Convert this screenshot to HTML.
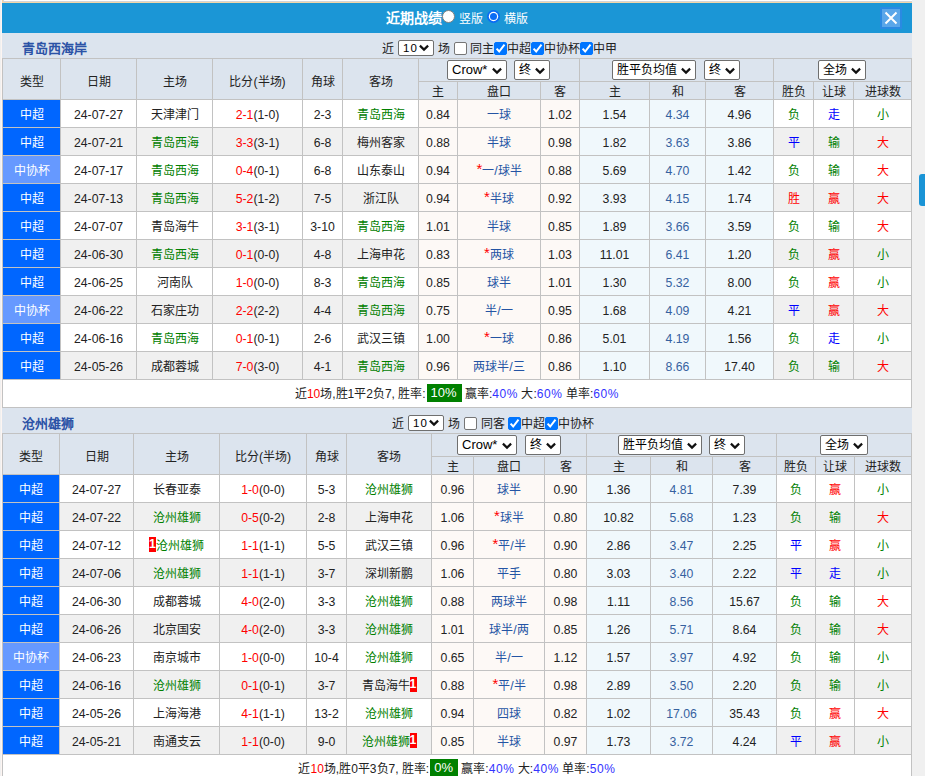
<!DOCTYPE html>
<html lang="zh-CN"><head><meta charset="utf-8"><title>近期战绩</title>
<style>
html,body{margin:0;padding:0}
body{width:925px;height:776px;overflow:hidden;position:relative;background:#f0f0f0;font-family:"Liberation Sans",sans-serif;font-size:12px;color:#222}
.n{font-size:12.25px}
#c>div,#c>span{position:absolute;box-sizing:border-box}
.sel{background:#fff;border:1px solid #6f6f6f;border-radius:2px;box-sizing:content-box!important;font-size:13px;color:#000}
.sel .st{position:absolute;left:4px;top:0;line-height:18px;white-space:nowrap}
.sel .chev{position:absolute;right:4px;top:5px}
.cb{width:13px;height:13px;border:1px solid #767676;border-radius:2px;background:#fff}
.cb.on{background:#0075ff;border-color:#0075ff}
.cb.on svg{position:absolute;left:-1px;top:-1px}
.rc{display:inline-block;background:#f00;color:#fff;font-size:12px;font-weight:bold;line-height:15px;width:7px;text-align:center;vertical-align:-2px;overflow:hidden}
.pct{display:inline-block;background:#008000;color:#fff;padding:0 5px 0 4px;line-height:18px;margin-left:1px;font-size:13px;vertical-align:1px}
.bl{color:#3333ff;letter-spacing:0.6px}
.ast{color:#f00;font-size:15px;line-height:10px;vertical-align:1px}
</style></head><body><div id="c">
<div style="left:2px;top:0px;width:910px;height:776px;background:#fff"></div>
<div style="left:2px;top:0px;width:910px;height:3px;background:#fff"></div>
<div style="left:2px;top:1px;width:910px;height:1px;background:#d4d4d8"></div>
<div style="left:2px;top:2px;width:910px;height:1px;background:#f2d7a8"></div>
<div style="left:2px;top:0px;width:1px;height:3px;background:#f2d7a8"></div>
<div style="left:3px;top:0px;width:1px;height:2px;background:#d4d4d8"></div>
<div style="left:1px;top:0px;width:1px;height:776px;background:#fdf5f2"></div>
<div style="left:2px;top:3px;width:910px;height:30px;background:#1b96d6"></div>
<div style="left:386px;top:8px;white-space:nowrap;font-size:14px;font-weight:bold;color:#fff;line-height:20px">近期战绩</div>
<div style="left:442px;top:10px;width:13px;height:13px;border-radius:50%;background:#fff;border:1px solid #808080"></div>
<div style="left:459px;top:11px;white-space:nowrap;font-size:12px;color:#fff;line-height:16px">竖版</div>
<div style="left:487px;top:10px;width:13px;height:13px"><svg width="13" height="13" viewBox="0 0 13 13"><circle cx="6.5" cy="6.5" r="6.5" fill="#0a6cf5"/><circle cx="6.5" cy="6.5" r="4.7" fill="#fff"/><circle cx="6.5" cy="6.5" r="3.5" fill="#0a6cf5"/></svg></div>
<div style="left:504px;top:11px;white-space:nowrap;font-size:12px;color:#fff;line-height:16px">横版</div>
<div style="left:880px;top:7px;width:22px;height:22px;background:#2a8ae2"></div>
<div style="left:882px;top:9px;width:18px;height:18px;background:#5aa6e9"><svg width="18" height="18" viewBox="0 0 18 18" style="position:absolute;left:0;top:0"><path d="M3.5 3.5 L14.5 14.5 M14.5 3.5 L3.5 14.5" stroke="#fff" stroke-width="2"/></svg></div>
<div style="left:2px;top:33px;width:910px;height:25px;background:#dce4ee"></div>
<div style="left:22px;top:41px;white-space:nowrap;font-size:13px;font-weight:bold;color:#2b52a6;line-height:15px">青岛西海岸</div>
<div style="left:382px;top:41px;white-space:nowrap;font-size:12px;line-height:16px">近</div>
<div class="sel" style="left:398px;top:40px;width:34px;height:14px;font-size:12px"><span class="st" style="line-height:14px;"><span style="font-size:11.5px;position:relative;left:0px;letter-spacing:1px">10</span></span><svg class="chev" style="top:3px" width="10" height="8" viewBox="0 0 10 8"><path d="M0.9 1.6 L5 5.6 L9.1 1.6" fill="none" stroke="#111" stroke-width="2.2"/></svg></div>
<div style="left:438px;top:41px;white-space:nowrap;font-size:12px;line-height:16px">场</div>
<div class="cb" style="left:454px;top:42px"></div>
<div style="left:470px;top:41px;white-space:nowrap;font-size:12px;line-height:16px">同主</div>
<div class="cb on" style="left:494px;top:42px"><svg width="13" height="13" viewBox="0 0 13 13"><path d="M2.6 6.6 L5.2 9.5 L10.5 2.7" fill="none" stroke="#fff" stroke-width="2"/></svg></div>
<div style="left:507px;top:41px;white-space:nowrap;font-size:12px;line-height:16px">中超</div>
<div class="cb on" style="left:531px;top:42px"><svg width="13" height="13" viewBox="0 0 13 13"><path d="M2.6 6.6 L5.2 9.5 L10.5 2.7" fill="none" stroke="#fff" stroke-width="2"/></svg></div>
<div style="left:544px;top:41px;white-space:nowrap;font-size:12px;line-height:16px">中协杯</div>
<div class="cb on" style="left:580px;top:42px"><svg width="13" height="13" viewBox="0 0 13 13"><path d="M2.6 6.6 L5.2 9.5 L10.5 2.7" fill="none" stroke="#fff" stroke-width="2"/></svg></div>
<div style="left:593px;top:41px;white-space:nowrap;font-size:12px;line-height:16px">中甲</div>
<div style="left:2px;top:58px;width:910px;height:42px;background:#dce4ee"></div>
<div style="left:2px;top:58px;width:910px;height:42px;background:#dce4ee"></div>
<div style="left:2px;top:99px;width:58px;height:28px;background:#0066ff"></div>
<div style="left:418px;top:99px;width:161px;height:28px;background:#fdf9f6"></div>
<div style="left:579px;top:99px;width:194px;height:28px;background:#f0f8fc"></div>
<div style="left:60px;top:127px;width:358px;height:28px;background:#f0f0f0"></div>
<div style="left:773px;top:127px;width:138px;height:28px;background:#f0f0f0"></div>
<div style="left:2px;top:127px;width:58px;height:28px;background:#0066ff"></div>
<div style="left:418px;top:127px;width:161px;height:28px;background:#fdf9f6"></div>
<div style="left:579px;top:127px;width:194px;height:28px;background:#f0f8fc"></div>
<div style="left:2px;top:155px;width:58px;height:28px;background:#6699ff"></div>
<div style="left:418px;top:155px;width:161px;height:28px;background:#fdf9f6"></div>
<div style="left:579px;top:155px;width:194px;height:28px;background:#f0f8fc"></div>
<div style="left:60px;top:183px;width:358px;height:28px;background:#f0f0f0"></div>
<div style="left:773px;top:183px;width:138px;height:28px;background:#f0f0f0"></div>
<div style="left:2px;top:183px;width:58px;height:28px;background:#0066ff"></div>
<div style="left:418px;top:183px;width:161px;height:28px;background:#fdf9f6"></div>
<div style="left:579px;top:183px;width:194px;height:28px;background:#f0f8fc"></div>
<div style="left:2px;top:211px;width:58px;height:28px;background:#0066ff"></div>
<div style="left:418px;top:211px;width:161px;height:28px;background:#fdf9f6"></div>
<div style="left:579px;top:211px;width:194px;height:28px;background:#f0f8fc"></div>
<div style="left:60px;top:239px;width:358px;height:28px;background:#f0f0f0"></div>
<div style="left:773px;top:239px;width:138px;height:28px;background:#f0f0f0"></div>
<div style="left:2px;top:239px;width:58px;height:28px;background:#0066ff"></div>
<div style="left:418px;top:239px;width:161px;height:28px;background:#fdf9f6"></div>
<div style="left:579px;top:239px;width:194px;height:28px;background:#f0f8fc"></div>
<div style="left:2px;top:267px;width:58px;height:28px;background:#0066ff"></div>
<div style="left:418px;top:267px;width:161px;height:28px;background:#fdf9f6"></div>
<div style="left:579px;top:267px;width:194px;height:28px;background:#f0f8fc"></div>
<div style="left:60px;top:295px;width:358px;height:28px;background:#f0f0f0"></div>
<div style="left:773px;top:295px;width:138px;height:28px;background:#f0f0f0"></div>
<div style="left:2px;top:295px;width:58px;height:28px;background:#6699ff"></div>
<div style="left:418px;top:295px;width:161px;height:28px;background:#fdf9f6"></div>
<div style="left:579px;top:295px;width:194px;height:28px;background:#f0f8fc"></div>
<div style="left:2px;top:323px;width:58px;height:28px;background:#0066ff"></div>
<div style="left:418px;top:323px;width:161px;height:28px;background:#fdf9f6"></div>
<div style="left:579px;top:323px;width:194px;height:28px;background:#f0f8fc"></div>
<div style="left:60px;top:351px;width:358px;height:28px;background:#f0f0f0"></div>
<div style="left:773px;top:351px;width:138px;height:28px;background:#f0f0f0"></div>
<div style="left:2px;top:351px;width:58px;height:28px;background:#0066ff"></div>
<div style="left:418px;top:351px;width:161px;height:28px;background:#fdf9f6"></div>
<div style="left:579px;top:351px;width:194px;height:28px;background:#f0f8fc"></div>
<div style="left:2px;top:379px;width:909px;height:28px;background:#fff"></div>
<div style="left:2px;top:58px;width:910px;height:1px;background:#c2c2c2"></div>
<div style="left:418px;top:81px;width:494px;height:1px;background:#c2c2c2"></div>
<div style="left:2px;top:99px;width:910px;height:1px;background:#c2c2c2"></div>
<div style="left:2px;top:127px;width:910px;height:1px;background:#c2c2c2"></div>
<div style="left:2px;top:155px;width:910px;height:1px;background:#c2c2c2"></div>
<div style="left:2px;top:183px;width:910px;height:1px;background:#c2c2c2"></div>
<div style="left:2px;top:211px;width:910px;height:1px;background:#c2c2c2"></div>
<div style="left:2px;top:239px;width:910px;height:1px;background:#c2c2c2"></div>
<div style="left:2px;top:267px;width:910px;height:1px;background:#c2c2c2"></div>
<div style="left:2px;top:295px;width:910px;height:1px;background:#c2c2c2"></div>
<div style="left:2px;top:323px;width:910px;height:1px;background:#c2c2c2"></div>
<div style="left:2px;top:351px;width:910px;height:1px;background:#c2c2c2"></div>
<div style="left:2px;top:379px;width:910px;height:1px;background:#c2c2c2"></div>
<div style="left:2px;top:407px;width:910px;height:1px;background:#c2c2c2"></div>
<div style="left:2px;top:58px;width:1px;height:350px;background:#c2c2c2"></div>
<div style="left:60px;top:58px;width:1px;height:322px;background:#c2c2c2"></div>
<div style="left:136px;top:58px;width:1px;height:322px;background:#c2c2c2"></div>
<div style="left:212px;top:58px;width:1px;height:322px;background:#c2c2c2"></div>
<div style="left:302px;top:58px;width:1px;height:322px;background:#c2c2c2"></div>
<div style="left:342px;top:58px;width:1px;height:322px;background:#c2c2c2"></div>
<div style="left:418px;top:58px;width:1px;height:322px;background:#c2c2c2"></div>
<div style="left:457px;top:81px;width:1px;height:299px;background:#c2c2c2"></div>
<div style="left:540px;top:81px;width:1px;height:299px;background:#c2c2c2"></div>
<div style="left:579px;top:58px;width:1px;height:322px;background:#c2c2c2"></div>
<div style="left:649px;top:81px;width:1px;height:299px;background:#c2c2c2"></div>
<div style="left:705px;top:81px;width:1px;height:299px;background:#c2c2c2"></div>
<div style="left:773px;top:58px;width:1px;height:322px;background:#c2c2c2"></div>
<div style="left:813px;top:81px;width:1px;height:299px;background:#c2c2c2"></div>
<div style="left:853px;top:81px;width:1px;height:299px;background:#c2c2c2"></div>
<div style="left:911px;top:58px;width:1px;height:350px;background:#c2c2c2"></div>
<div style="left:3px;top:62px;width:57px;height:40px;text-align:center;line-height:40px;white-space:nowrap;">类型</div>
<div style="left:61px;top:62px;width:75px;height:40px;text-align:center;line-height:40px;white-space:nowrap;">日期</div>
<div style="left:137px;top:62px;width:75px;height:40px;text-align:center;line-height:40px;white-space:nowrap;">主场</div>
<div style="left:213px;top:62px;width:89px;height:40px;text-align:center;line-height:40px;white-space:nowrap;">比分<span class="n">(</span>半场<span class="n">)</span></div>
<div style="left:303px;top:62px;width:39px;height:40px;text-align:center;line-height:40px;white-space:nowrap;">角球</div>
<div style="left:343px;top:62px;width:75px;height:40px;text-align:center;line-height:40px;white-space:nowrap;">客场</div>
<div style="left:419px;top:84px;width:38px;height:17px;text-align:center;line-height:17px;white-space:nowrap;">主</div>
<div style="left:458px;top:84px;width:82px;height:17px;text-align:center;line-height:17px;white-space:nowrap;">盘口</div>
<div style="left:541px;top:84px;width:38px;height:17px;text-align:center;line-height:17px;white-space:nowrap;">客</div>
<div style="left:580px;top:84px;width:69px;height:17px;text-align:center;line-height:17px;white-space:nowrap;">主</div>
<div style="left:650px;top:84px;width:55px;height:17px;text-align:center;line-height:17px;white-space:nowrap;">和</div>
<div style="left:706px;top:84px;width:67px;height:17px;text-align:center;line-height:17px;white-space:nowrap;">客</div>
<div style="left:774px;top:84px;width:39px;height:17px;text-align:center;line-height:17px;white-space:nowrap;">胜负</div>
<div style="left:814px;top:84px;width:39px;height:17px;text-align:center;line-height:17px;white-space:nowrap;">让球</div>
<div style="left:854px;top:84px;width:57px;height:17px;text-align:center;line-height:17px;white-space:nowrap;">进球数</div>
<div class="sel" style="left:447px;top:60px;width:58px;height:18px;"><span class="st" style="line-height:18px;">Crow*</span><svg class="chev" style="top:6px" width="10" height="8" viewBox="0 0 10 8"><path d="M0.9 1.6 L5 5.6 L9.1 1.6" fill="none" stroke="#111" stroke-width="2.2"/></svg></div>
<div class="sel" style="left:514px;top:60px;width:34px;height:18px;"><span class="st" style="line-height:18px;font-size:12px">终</span><svg class="chev" style="top:6px" width="10" height="8" viewBox="0 0 10 8"><path d="M0.9 1.6 L5 5.6 L9.1 1.6" fill="none" stroke="#111" stroke-width="2.2"/></svg></div>
<div class="sel" style="left:612px;top:60px;width:82px;height:18px;"><span class="st" style="line-height:18px;font-size:12px">胜平负均值</span><svg class="chev" style="top:6px" width="10" height="8" viewBox="0 0 10 8"><path d="M0.9 1.6 L5 5.6 L9.1 1.6" fill="none" stroke="#111" stroke-width="2.2"/></svg></div>
<div class="sel" style="left:704px;top:60px;width:34px;height:18px;"><span class="st" style="line-height:18px;font-size:12px">终</span><svg class="chev" style="top:6px" width="10" height="8" viewBox="0 0 10 8"><path d="M0.9 1.6 L5 5.6 L9.1 1.6" fill="none" stroke="#111" stroke-width="2.2"/></svg></div>
<div class="sel" style="left:818px;top:60px;width:46px;height:18px;"><span class="st" style="line-height:18px;font-size:12px">全场</span><svg class="chev" style="top:6px" width="10" height="8" viewBox="0 0 10 8"><path d="M0.9 1.6 L5 5.6 L9.1 1.6" fill="none" stroke="#111" stroke-width="2.2"/></svg></div>
<div style="left:3px;top:102px;width:57px;height:27px;text-align:center;line-height:27px;white-space:nowrap;color:#fff">中超</div>
<div style="left:61px;top:102px;width:75px;height:27px;text-align:center;line-height:27px;white-space:nowrap;"><span class="n">24-07-27</span></div>
<div style="left:137px;top:102px;width:75px;height:27px;text-align:center;line-height:27px;white-space:nowrap;color:#222">天津津门</div>
<div style="left:343px;top:102px;width:75px;height:27px;text-align:center;line-height:27px;white-space:nowrap;color:#008000">青岛西海</div>
<div style="left:213px;top:102px;width:89px;height:27px;text-align:center;line-height:27px;white-space:nowrap;"><span style="color:#ff0000"><span class="n">2-1</span></span><span class="n">(1-0)</span></div>
<div style="left:303px;top:102px;width:39px;height:27px;text-align:center;line-height:27px;white-space:nowrap;"><span class="n">2-3</span></div>
<div style="left:419px;top:102px;width:38px;height:27px;text-align:center;line-height:27px;white-space:nowrap;"><span class="n">0.84</span></div>
<div style="left:458px;top:102px;width:82px;height:27px;text-align:center;line-height:27px;white-space:nowrap;color:#2454a4">一球</div>
<div style="left:541px;top:102px;width:38px;height:27px;text-align:center;line-height:27px;white-space:nowrap;"><span class="n">1.02</span></div>
<div style="left:580px;top:102px;width:69px;height:27px;text-align:center;line-height:27px;white-space:nowrap;"><span class="n">1.54</span></div>
<div style="left:650px;top:102px;width:55px;height:27px;text-align:center;line-height:27px;white-space:nowrap;color:#36619f"><span class="n">4.34</span></div>
<div style="left:706px;top:102px;width:67px;height:27px;text-align:center;line-height:27px;white-space:nowrap;"><span class="n">4.96</span></div>
<div style="left:774px;top:102px;width:39px;height:27px;text-align:center;line-height:27px;white-space:nowrap;color:#008000">负</div>
<div style="left:814px;top:102px;width:39px;height:27px;text-align:center;line-height:27px;white-space:nowrap;color:#0000ff">走</div>
<div style="left:854px;top:102px;width:57px;height:27px;text-align:center;line-height:27px;white-space:nowrap;color:#008000">小</div>
<div style="left:3px;top:130px;width:57px;height:27px;text-align:center;line-height:27px;white-space:nowrap;color:#fff">中超</div>
<div style="left:61px;top:130px;width:75px;height:27px;text-align:center;line-height:27px;white-space:nowrap;"><span class="n">24-07-21</span></div>
<div style="left:137px;top:130px;width:75px;height:27px;text-align:center;line-height:27px;white-space:nowrap;color:#008000">青岛西海</div>
<div style="left:343px;top:130px;width:75px;height:27px;text-align:center;line-height:27px;white-space:nowrap;color:#222">梅州客家</div>
<div style="left:213px;top:130px;width:89px;height:27px;text-align:center;line-height:27px;white-space:nowrap;"><span style="color:#ff0000"><span class="n">3-3</span></span><span class="n">(3-1)</span></div>
<div style="left:303px;top:130px;width:39px;height:27px;text-align:center;line-height:27px;white-space:nowrap;"><span class="n">6-8</span></div>
<div style="left:419px;top:130px;width:38px;height:27px;text-align:center;line-height:27px;white-space:nowrap;"><span class="n">0.88</span></div>
<div style="left:458px;top:130px;width:82px;height:27px;text-align:center;line-height:27px;white-space:nowrap;color:#2454a4">半球</div>
<div style="left:541px;top:130px;width:38px;height:27px;text-align:center;line-height:27px;white-space:nowrap;"><span class="n">0.98</span></div>
<div style="left:580px;top:130px;width:69px;height:27px;text-align:center;line-height:27px;white-space:nowrap;"><span class="n">1.82</span></div>
<div style="left:650px;top:130px;width:55px;height:27px;text-align:center;line-height:27px;white-space:nowrap;color:#36619f"><span class="n">3.63</span></div>
<div style="left:706px;top:130px;width:67px;height:27px;text-align:center;line-height:27px;white-space:nowrap;"><span class="n">3.86</span></div>
<div style="left:774px;top:130px;width:39px;height:27px;text-align:center;line-height:27px;white-space:nowrap;color:#0000ff">平</div>
<div style="left:814px;top:130px;width:39px;height:27px;text-align:center;line-height:27px;white-space:nowrap;color:#008000">输</div>
<div style="left:854px;top:130px;width:57px;height:27px;text-align:center;line-height:27px;white-space:nowrap;color:#ff0000">大</div>
<div style="left:3px;top:158px;width:57px;height:27px;text-align:center;line-height:27px;white-space:nowrap;color:#fff">中协杯</div>
<div style="left:61px;top:158px;width:75px;height:27px;text-align:center;line-height:27px;white-space:nowrap;"><span class="n">24-07-17</span></div>
<div style="left:137px;top:158px;width:75px;height:27px;text-align:center;line-height:27px;white-space:nowrap;color:#008000">青岛西海</div>
<div style="left:343px;top:158px;width:75px;height:27px;text-align:center;line-height:27px;white-space:nowrap;color:#222">山东泰山</div>
<div style="left:213px;top:158px;width:89px;height:27px;text-align:center;line-height:27px;white-space:nowrap;"><span style="color:#ff0000"><span class="n">0-4</span></span><span class="n">(0-1)</span></div>
<div style="left:303px;top:158px;width:39px;height:27px;text-align:center;line-height:27px;white-space:nowrap;"><span class="n">6-8</span></div>
<div style="left:419px;top:158px;width:38px;height:27px;text-align:center;line-height:27px;white-space:nowrap;"><span class="n">0.94</span></div>
<div style="left:458px;top:158px;width:82px;height:27px;text-align:center;line-height:27px;white-space:nowrap;color:#2454a4"><span class="ast">*</span>一<span class="n">/</span>球半</div>
<div style="left:541px;top:158px;width:38px;height:27px;text-align:center;line-height:27px;white-space:nowrap;"><span class="n">0.88</span></div>
<div style="left:580px;top:158px;width:69px;height:27px;text-align:center;line-height:27px;white-space:nowrap;"><span class="n">5.69</span></div>
<div style="left:650px;top:158px;width:55px;height:27px;text-align:center;line-height:27px;white-space:nowrap;color:#36619f"><span class="n">4.70</span></div>
<div style="left:706px;top:158px;width:67px;height:27px;text-align:center;line-height:27px;white-space:nowrap;"><span class="n">1.42</span></div>
<div style="left:774px;top:158px;width:39px;height:27px;text-align:center;line-height:27px;white-space:nowrap;color:#008000">负</div>
<div style="left:814px;top:158px;width:39px;height:27px;text-align:center;line-height:27px;white-space:nowrap;color:#008000">输</div>
<div style="left:854px;top:158px;width:57px;height:27px;text-align:center;line-height:27px;white-space:nowrap;color:#ff0000">大</div>
<div style="left:3px;top:186px;width:57px;height:27px;text-align:center;line-height:27px;white-space:nowrap;color:#fff">中超</div>
<div style="left:61px;top:186px;width:75px;height:27px;text-align:center;line-height:27px;white-space:nowrap;"><span class="n">24-07-13</span></div>
<div style="left:137px;top:186px;width:75px;height:27px;text-align:center;line-height:27px;white-space:nowrap;color:#008000">青岛西海</div>
<div style="left:343px;top:186px;width:75px;height:27px;text-align:center;line-height:27px;white-space:nowrap;color:#222">浙江队</div>
<div style="left:213px;top:186px;width:89px;height:27px;text-align:center;line-height:27px;white-space:nowrap;"><span style="color:#ff0000"><span class="n">5-2</span></span><span class="n">(1-2)</span></div>
<div style="left:303px;top:186px;width:39px;height:27px;text-align:center;line-height:27px;white-space:nowrap;"><span class="n">7-5</span></div>
<div style="left:419px;top:186px;width:38px;height:27px;text-align:center;line-height:27px;white-space:nowrap;"><span class="n">0.94</span></div>
<div style="left:458px;top:186px;width:82px;height:27px;text-align:center;line-height:27px;white-space:nowrap;color:#2454a4"><span class="ast">*</span>半球</div>
<div style="left:541px;top:186px;width:38px;height:27px;text-align:center;line-height:27px;white-space:nowrap;"><span class="n">0.92</span></div>
<div style="left:580px;top:186px;width:69px;height:27px;text-align:center;line-height:27px;white-space:nowrap;"><span class="n">3.93</span></div>
<div style="left:650px;top:186px;width:55px;height:27px;text-align:center;line-height:27px;white-space:nowrap;color:#36619f"><span class="n">4.15</span></div>
<div style="left:706px;top:186px;width:67px;height:27px;text-align:center;line-height:27px;white-space:nowrap;"><span class="n">1.74</span></div>
<div style="left:774px;top:186px;width:39px;height:27px;text-align:center;line-height:27px;white-space:nowrap;color:#ff0000">胜</div>
<div style="left:814px;top:186px;width:39px;height:27px;text-align:center;line-height:27px;white-space:nowrap;color:#ff0000">赢</div>
<div style="left:854px;top:186px;width:57px;height:27px;text-align:center;line-height:27px;white-space:nowrap;color:#ff0000">大</div>
<div style="left:3px;top:214px;width:57px;height:27px;text-align:center;line-height:27px;white-space:nowrap;color:#fff">中超</div>
<div style="left:61px;top:214px;width:75px;height:27px;text-align:center;line-height:27px;white-space:nowrap;"><span class="n">24-07-07</span></div>
<div style="left:137px;top:214px;width:75px;height:27px;text-align:center;line-height:27px;white-space:nowrap;color:#222">青岛海牛</div>
<div style="left:343px;top:214px;width:75px;height:27px;text-align:center;line-height:27px;white-space:nowrap;color:#008000">青岛西海</div>
<div style="left:213px;top:214px;width:89px;height:27px;text-align:center;line-height:27px;white-space:nowrap;"><span style="color:#ff0000"><span class="n">3-1</span></span><span class="n">(3-1)</span></div>
<div style="left:303px;top:214px;width:39px;height:27px;text-align:center;line-height:27px;white-space:nowrap;"><span class="n">3-10</span></div>
<div style="left:419px;top:214px;width:38px;height:27px;text-align:center;line-height:27px;white-space:nowrap;"><span class="n">1.01</span></div>
<div style="left:458px;top:214px;width:82px;height:27px;text-align:center;line-height:27px;white-space:nowrap;color:#2454a4">半球</div>
<div style="left:541px;top:214px;width:38px;height:27px;text-align:center;line-height:27px;white-space:nowrap;"><span class="n">0.85</span></div>
<div style="left:580px;top:214px;width:69px;height:27px;text-align:center;line-height:27px;white-space:nowrap;"><span class="n">1.89</span></div>
<div style="left:650px;top:214px;width:55px;height:27px;text-align:center;line-height:27px;white-space:nowrap;color:#36619f"><span class="n">3.66</span></div>
<div style="left:706px;top:214px;width:67px;height:27px;text-align:center;line-height:27px;white-space:nowrap;"><span class="n">3.59</span></div>
<div style="left:774px;top:214px;width:39px;height:27px;text-align:center;line-height:27px;white-space:nowrap;color:#008000">负</div>
<div style="left:814px;top:214px;width:39px;height:27px;text-align:center;line-height:27px;white-space:nowrap;color:#008000">输</div>
<div style="left:854px;top:214px;width:57px;height:27px;text-align:center;line-height:27px;white-space:nowrap;color:#ff0000">大</div>
<div style="left:3px;top:242px;width:57px;height:27px;text-align:center;line-height:27px;white-space:nowrap;color:#fff">中超</div>
<div style="left:61px;top:242px;width:75px;height:27px;text-align:center;line-height:27px;white-space:nowrap;"><span class="n">24-06-30</span></div>
<div style="left:137px;top:242px;width:75px;height:27px;text-align:center;line-height:27px;white-space:nowrap;color:#008000">青岛西海</div>
<div style="left:343px;top:242px;width:75px;height:27px;text-align:center;line-height:27px;white-space:nowrap;color:#222">上海申花</div>
<div style="left:213px;top:242px;width:89px;height:27px;text-align:center;line-height:27px;white-space:nowrap;"><span style="color:#ff0000"><span class="n">0-1</span></span><span class="n">(0-0)</span></div>
<div style="left:303px;top:242px;width:39px;height:27px;text-align:center;line-height:27px;white-space:nowrap;"><span class="n">4-8</span></div>
<div style="left:419px;top:242px;width:38px;height:27px;text-align:center;line-height:27px;white-space:nowrap;"><span class="n">0.83</span></div>
<div style="left:458px;top:242px;width:82px;height:27px;text-align:center;line-height:27px;white-space:nowrap;color:#2454a4"><span class="ast">*</span>两球</div>
<div style="left:541px;top:242px;width:38px;height:27px;text-align:center;line-height:27px;white-space:nowrap;"><span class="n">1.03</span></div>
<div style="left:580px;top:242px;width:69px;height:27px;text-align:center;line-height:27px;white-space:nowrap;"><span class="n">11.01</span></div>
<div style="left:650px;top:242px;width:55px;height:27px;text-align:center;line-height:27px;white-space:nowrap;color:#36619f"><span class="n">6.41</span></div>
<div style="left:706px;top:242px;width:67px;height:27px;text-align:center;line-height:27px;white-space:nowrap;"><span class="n">1.20</span></div>
<div style="left:774px;top:242px;width:39px;height:27px;text-align:center;line-height:27px;white-space:nowrap;color:#008000">负</div>
<div style="left:814px;top:242px;width:39px;height:27px;text-align:center;line-height:27px;white-space:nowrap;color:#ff0000">赢</div>
<div style="left:854px;top:242px;width:57px;height:27px;text-align:center;line-height:27px;white-space:nowrap;color:#008000">小</div>
<div style="left:3px;top:270px;width:57px;height:27px;text-align:center;line-height:27px;white-space:nowrap;color:#fff">中超</div>
<div style="left:61px;top:270px;width:75px;height:27px;text-align:center;line-height:27px;white-space:nowrap;"><span class="n">24-06-25</span></div>
<div style="left:137px;top:270px;width:75px;height:27px;text-align:center;line-height:27px;white-space:nowrap;color:#222">河南队</div>
<div style="left:343px;top:270px;width:75px;height:27px;text-align:center;line-height:27px;white-space:nowrap;color:#008000">青岛西海</div>
<div style="left:213px;top:270px;width:89px;height:27px;text-align:center;line-height:27px;white-space:nowrap;"><span style="color:#ff0000"><span class="n">1-0</span></span><span class="n">(0-0)</span></div>
<div style="left:303px;top:270px;width:39px;height:27px;text-align:center;line-height:27px;white-space:nowrap;"><span class="n">8-3</span></div>
<div style="left:419px;top:270px;width:38px;height:27px;text-align:center;line-height:27px;white-space:nowrap;"><span class="n">0.85</span></div>
<div style="left:458px;top:270px;width:82px;height:27px;text-align:center;line-height:27px;white-space:nowrap;color:#2454a4">球半</div>
<div style="left:541px;top:270px;width:38px;height:27px;text-align:center;line-height:27px;white-space:nowrap;"><span class="n">1.01</span></div>
<div style="left:580px;top:270px;width:69px;height:27px;text-align:center;line-height:27px;white-space:nowrap;"><span class="n">1.30</span></div>
<div style="left:650px;top:270px;width:55px;height:27px;text-align:center;line-height:27px;white-space:nowrap;color:#36619f"><span class="n">5.32</span></div>
<div style="left:706px;top:270px;width:67px;height:27px;text-align:center;line-height:27px;white-space:nowrap;"><span class="n">8.00</span></div>
<div style="left:774px;top:270px;width:39px;height:27px;text-align:center;line-height:27px;white-space:nowrap;color:#008000">负</div>
<div style="left:814px;top:270px;width:39px;height:27px;text-align:center;line-height:27px;white-space:nowrap;color:#ff0000">赢</div>
<div style="left:854px;top:270px;width:57px;height:27px;text-align:center;line-height:27px;white-space:nowrap;color:#008000">小</div>
<div style="left:3px;top:298px;width:57px;height:27px;text-align:center;line-height:27px;white-space:nowrap;color:#fff">中协杯</div>
<div style="left:61px;top:298px;width:75px;height:27px;text-align:center;line-height:27px;white-space:nowrap;"><span class="n">24-06-22</span></div>
<div style="left:137px;top:298px;width:75px;height:27px;text-align:center;line-height:27px;white-space:nowrap;color:#222">石家庄功</div>
<div style="left:343px;top:298px;width:75px;height:27px;text-align:center;line-height:27px;white-space:nowrap;color:#008000">青岛西海</div>
<div style="left:213px;top:298px;width:89px;height:27px;text-align:center;line-height:27px;white-space:nowrap;"><span style="color:#ff0000"><span class="n">2-2</span></span><span class="n">(2-2)</span></div>
<div style="left:303px;top:298px;width:39px;height:27px;text-align:center;line-height:27px;white-space:nowrap;"><span class="n">4-4</span></div>
<div style="left:419px;top:298px;width:38px;height:27px;text-align:center;line-height:27px;white-space:nowrap;"><span class="n">0.75</span></div>
<div style="left:458px;top:298px;width:82px;height:27px;text-align:center;line-height:27px;white-space:nowrap;color:#2454a4">半<span class="n">/</span>一</div>
<div style="left:541px;top:298px;width:38px;height:27px;text-align:center;line-height:27px;white-space:nowrap;"><span class="n">0.95</span></div>
<div style="left:580px;top:298px;width:69px;height:27px;text-align:center;line-height:27px;white-space:nowrap;"><span class="n">1.68</span></div>
<div style="left:650px;top:298px;width:55px;height:27px;text-align:center;line-height:27px;white-space:nowrap;color:#36619f"><span class="n">4.09</span></div>
<div style="left:706px;top:298px;width:67px;height:27px;text-align:center;line-height:27px;white-space:nowrap;"><span class="n">4.21</span></div>
<div style="left:774px;top:298px;width:39px;height:27px;text-align:center;line-height:27px;white-space:nowrap;color:#0000ff">平</div>
<div style="left:814px;top:298px;width:39px;height:27px;text-align:center;line-height:27px;white-space:nowrap;color:#ff0000">赢</div>
<div style="left:854px;top:298px;width:57px;height:27px;text-align:center;line-height:27px;white-space:nowrap;color:#ff0000">大</div>
<div style="left:3px;top:326px;width:57px;height:27px;text-align:center;line-height:27px;white-space:nowrap;color:#fff">中超</div>
<div style="left:61px;top:326px;width:75px;height:27px;text-align:center;line-height:27px;white-space:nowrap;"><span class="n">24-06-16</span></div>
<div style="left:137px;top:326px;width:75px;height:27px;text-align:center;line-height:27px;white-space:nowrap;color:#008000">青岛西海</div>
<div style="left:343px;top:326px;width:75px;height:27px;text-align:center;line-height:27px;white-space:nowrap;color:#222">武汉三镇</div>
<div style="left:213px;top:326px;width:89px;height:27px;text-align:center;line-height:27px;white-space:nowrap;"><span style="color:#ff0000"><span class="n">0-1</span></span><span class="n">(0-1)</span></div>
<div style="left:303px;top:326px;width:39px;height:27px;text-align:center;line-height:27px;white-space:nowrap;"><span class="n">2-6</span></div>
<div style="left:419px;top:326px;width:38px;height:27px;text-align:center;line-height:27px;white-space:nowrap;"><span class="n">1.00</span></div>
<div style="left:458px;top:326px;width:82px;height:27px;text-align:center;line-height:27px;white-space:nowrap;color:#2454a4"><span class="ast">*</span>一球</div>
<div style="left:541px;top:326px;width:38px;height:27px;text-align:center;line-height:27px;white-space:nowrap;"><span class="n">0.86</span></div>
<div style="left:580px;top:326px;width:69px;height:27px;text-align:center;line-height:27px;white-space:nowrap;"><span class="n">5.01</span></div>
<div style="left:650px;top:326px;width:55px;height:27px;text-align:center;line-height:27px;white-space:nowrap;color:#36619f"><span class="n">4.19</span></div>
<div style="left:706px;top:326px;width:67px;height:27px;text-align:center;line-height:27px;white-space:nowrap;"><span class="n">1.56</span></div>
<div style="left:774px;top:326px;width:39px;height:27px;text-align:center;line-height:27px;white-space:nowrap;color:#008000">负</div>
<div style="left:814px;top:326px;width:39px;height:27px;text-align:center;line-height:27px;white-space:nowrap;color:#0000ff">走</div>
<div style="left:854px;top:326px;width:57px;height:27px;text-align:center;line-height:27px;white-space:nowrap;color:#008000">小</div>
<div style="left:3px;top:354px;width:57px;height:27px;text-align:center;line-height:27px;white-space:nowrap;color:#fff">中超</div>
<div style="left:61px;top:354px;width:75px;height:27px;text-align:center;line-height:27px;white-space:nowrap;"><span class="n">24-05-26</span></div>
<div style="left:137px;top:354px;width:75px;height:27px;text-align:center;line-height:27px;white-space:nowrap;color:#222">成都蓉城</div>
<div style="left:343px;top:354px;width:75px;height:27px;text-align:center;line-height:27px;white-space:nowrap;color:#008000">青岛西海</div>
<div style="left:213px;top:354px;width:89px;height:27px;text-align:center;line-height:27px;white-space:nowrap;"><span style="color:#ff0000"><span class="n">7-0</span></span><span class="n">(3-0)</span></div>
<div style="left:303px;top:354px;width:39px;height:27px;text-align:center;line-height:27px;white-space:nowrap;"><span class="n">4-1</span></div>
<div style="left:419px;top:354px;width:38px;height:27px;text-align:center;line-height:27px;white-space:nowrap;"><span class="n">0.96</span></div>
<div style="left:458px;top:354px;width:82px;height:27px;text-align:center;line-height:27px;white-space:nowrap;color:#2454a4">两球半<span class="n">/</span>三</div>
<div style="left:541px;top:354px;width:38px;height:27px;text-align:center;line-height:27px;white-space:nowrap;"><span class="n">0.86</span></div>
<div style="left:580px;top:354px;width:69px;height:27px;text-align:center;line-height:27px;white-space:nowrap;"><span class="n">1.10</span></div>
<div style="left:650px;top:354px;width:55px;height:27px;text-align:center;line-height:27px;white-space:nowrap;color:#36619f"><span class="n">8.66</span></div>
<div style="left:706px;top:354px;width:67px;height:27px;text-align:center;line-height:27px;white-space:nowrap;"><span class="n">17.40</span></div>
<div style="left:774px;top:354px;width:39px;height:27px;text-align:center;line-height:27px;white-space:nowrap;color:#008000">负</div>
<div style="left:814px;top:354px;width:39px;height:27px;text-align:center;line-height:27px;white-space:nowrap;color:#008000">输</div>
<div style="left:854px;top:354px;width:57px;height:27px;text-align:center;line-height:27px;white-space:nowrap;color:#ff0000">大</div>
<div style="left:3px;top:381px;width:908px;height:27px;text-align:center;line-height:27px;white-space:nowrap;">近<span style="color:#f00">10</span>场,胜1平2负7, 胜率:<span class="pct">10%</span> 赢率:<span class="bl">40%</span> 大:<span class="bl">60%</span> 单率:<span class="bl">60%</span></div>
<div style="left:2px;top:408px;width:910px;height:25px;background:#dce4ee"></div>
<div style="left:22px;top:416px;white-space:nowrap;font-size:13px;font-weight:bold;color:#2b52a6;line-height:15px">沧州雄狮</div>
<div style="left:392px;top:416px;white-space:nowrap;font-size:12px;line-height:16px">近</div>
<div class="sel" style="left:408px;top:415px;width:34px;height:14px;font-size:12px"><span class="st" style="line-height:14px;"><span style="font-size:11.5px;position:relative;left:0px;letter-spacing:1px">10</span></span><svg class="chev" style="top:3px" width="10" height="8" viewBox="0 0 10 8"><path d="M0.9 1.6 L5 5.6 L9.1 1.6" fill="none" stroke="#111" stroke-width="2.2"/></svg></div>
<div style="left:448px;top:416px;white-space:nowrap;font-size:12px;line-height:16px">场</div>
<div class="cb" style="left:464px;top:417px"></div>
<div style="left:481px;top:416px;white-space:nowrap;font-size:12px;line-height:16px">同客</div>
<div class="cb on" style="left:508px;top:417px"><svg width="13" height="13" viewBox="0 0 13 13"><path d="M2.6 6.6 L5.2 9.5 L10.5 2.7" fill="none" stroke="#fff" stroke-width="2"/></svg></div>
<div style="left:521px;top:416px;white-space:nowrap;font-size:12px;line-height:16px">中超</div>
<div class="cb on" style="left:545px;top:417px"><svg width="13" height="13" viewBox="0 0 13 13"><path d="M2.6 6.6 L5.2 9.5 L10.5 2.7" fill="none" stroke="#fff" stroke-width="2"/></svg></div>
<div style="left:558px;top:416px;white-space:nowrap;font-size:12px;line-height:16px">中协杯</div>
<div style="left:2px;top:433px;width:910px;height:42px;background:#dce4ee"></div>
<div style="left:2px;top:433px;width:910px;height:42px;background:#dce4ee"></div>
<div style="left:2px;top:474px;width:57px;height:28px;background:#0066ff"></div>
<div style="left:431px;top:474px;width:155px;height:28px;background:#fdf9f6"></div>
<div style="left:586px;top:474px;width:190px;height:28px;background:#f0f8fc"></div>
<div style="left:59px;top:502px;width:372px;height:28px;background:#f0f0f0"></div>
<div style="left:776px;top:502px;width:135px;height:28px;background:#f0f0f0"></div>
<div style="left:2px;top:502px;width:57px;height:28px;background:#0066ff"></div>
<div style="left:431px;top:502px;width:155px;height:28px;background:#fdf9f6"></div>
<div style="left:586px;top:502px;width:190px;height:28px;background:#f0f8fc"></div>
<div style="left:2px;top:530px;width:57px;height:28px;background:#0066ff"></div>
<div style="left:431px;top:530px;width:155px;height:28px;background:#fdf9f6"></div>
<div style="left:586px;top:530px;width:190px;height:28px;background:#f0f8fc"></div>
<div style="left:59px;top:558px;width:372px;height:28px;background:#f0f0f0"></div>
<div style="left:776px;top:558px;width:135px;height:28px;background:#f0f0f0"></div>
<div style="left:2px;top:558px;width:57px;height:28px;background:#0066ff"></div>
<div style="left:431px;top:558px;width:155px;height:28px;background:#fdf9f6"></div>
<div style="left:586px;top:558px;width:190px;height:28px;background:#f0f8fc"></div>
<div style="left:2px;top:586px;width:57px;height:28px;background:#0066ff"></div>
<div style="left:431px;top:586px;width:155px;height:28px;background:#fdf9f6"></div>
<div style="left:586px;top:586px;width:190px;height:28px;background:#f0f8fc"></div>
<div style="left:59px;top:614px;width:372px;height:28px;background:#f0f0f0"></div>
<div style="left:776px;top:614px;width:135px;height:28px;background:#f0f0f0"></div>
<div style="left:2px;top:614px;width:57px;height:28px;background:#0066ff"></div>
<div style="left:431px;top:614px;width:155px;height:28px;background:#fdf9f6"></div>
<div style="left:586px;top:614px;width:190px;height:28px;background:#f0f8fc"></div>
<div style="left:2px;top:642px;width:57px;height:28px;background:#6699ff"></div>
<div style="left:431px;top:642px;width:155px;height:28px;background:#fdf9f6"></div>
<div style="left:586px;top:642px;width:190px;height:28px;background:#f0f8fc"></div>
<div style="left:59px;top:670px;width:372px;height:28px;background:#f0f0f0"></div>
<div style="left:776px;top:670px;width:135px;height:28px;background:#f0f0f0"></div>
<div style="left:2px;top:670px;width:57px;height:28px;background:#0066ff"></div>
<div style="left:431px;top:670px;width:155px;height:28px;background:#fdf9f6"></div>
<div style="left:586px;top:670px;width:190px;height:28px;background:#f0f8fc"></div>
<div style="left:2px;top:698px;width:57px;height:28px;background:#0066ff"></div>
<div style="left:431px;top:698px;width:155px;height:28px;background:#fdf9f6"></div>
<div style="left:586px;top:698px;width:190px;height:28px;background:#f0f8fc"></div>
<div style="left:59px;top:726px;width:372px;height:28px;background:#f0f0f0"></div>
<div style="left:776px;top:726px;width:135px;height:28px;background:#f0f0f0"></div>
<div style="left:2px;top:726px;width:57px;height:28px;background:#0066ff"></div>
<div style="left:431px;top:726px;width:155px;height:28px;background:#fdf9f6"></div>
<div style="left:586px;top:726px;width:190px;height:28px;background:#f0f8fc"></div>
<div style="left:2px;top:754px;width:909px;height:28px;background:#fff"></div>
<div style="left:2px;top:433px;width:910px;height:1px;background:#c2c2c2"></div>
<div style="left:431px;top:456px;width:481px;height:1px;background:#c2c2c2"></div>
<div style="left:2px;top:474px;width:910px;height:1px;background:#c2c2c2"></div>
<div style="left:2px;top:502px;width:910px;height:1px;background:#c2c2c2"></div>
<div style="left:2px;top:530px;width:910px;height:1px;background:#c2c2c2"></div>
<div style="left:2px;top:558px;width:910px;height:1px;background:#c2c2c2"></div>
<div style="left:2px;top:586px;width:910px;height:1px;background:#c2c2c2"></div>
<div style="left:2px;top:614px;width:910px;height:1px;background:#c2c2c2"></div>
<div style="left:2px;top:642px;width:910px;height:1px;background:#c2c2c2"></div>
<div style="left:2px;top:670px;width:910px;height:1px;background:#c2c2c2"></div>
<div style="left:2px;top:698px;width:910px;height:1px;background:#c2c2c2"></div>
<div style="left:2px;top:726px;width:910px;height:1px;background:#c2c2c2"></div>
<div style="left:2px;top:754px;width:910px;height:1px;background:#c2c2c2"></div>
<div style="left:2px;top:782px;width:910px;height:1px;background:#c2c2c2"></div>
<div style="left:2px;top:433px;width:1px;height:350px;background:#c2c2c2"></div>
<div style="left:59px;top:433px;width:1px;height:322px;background:#c2c2c2"></div>
<div style="left:133px;top:433px;width:1px;height:322px;background:#c2c2c2"></div>
<div style="left:219px;top:433px;width:1px;height:322px;background:#c2c2c2"></div>
<div style="left:306px;top:433px;width:1px;height:322px;background:#c2c2c2"></div>
<div style="left:346px;top:433px;width:1px;height:322px;background:#c2c2c2"></div>
<div style="left:431px;top:433px;width:1px;height:322px;background:#c2c2c2"></div>
<div style="left:473px;top:456px;width:1px;height:299px;background:#c2c2c2"></div>
<div style="left:544px;top:456px;width:1px;height:299px;background:#c2c2c2"></div>
<div style="left:586px;top:433px;width:1px;height:322px;background:#c2c2c2"></div>
<div style="left:650px;top:456px;width:1px;height:299px;background:#c2c2c2"></div>
<div style="left:712px;top:456px;width:1px;height:299px;background:#c2c2c2"></div>
<div style="left:776px;top:433px;width:1px;height:322px;background:#c2c2c2"></div>
<div style="left:815px;top:456px;width:1px;height:299px;background:#c2c2c2"></div>
<div style="left:854px;top:456px;width:1px;height:299px;background:#c2c2c2"></div>
<div style="left:911px;top:433px;width:1px;height:350px;background:#c2c2c2"></div>
<div style="left:3px;top:437px;width:56px;height:40px;text-align:center;line-height:40px;white-space:nowrap;">类型</div>
<div style="left:60px;top:437px;width:73px;height:40px;text-align:center;line-height:40px;white-space:nowrap;">日期</div>
<div style="left:134px;top:437px;width:85px;height:40px;text-align:center;line-height:40px;white-space:nowrap;">主场</div>
<div style="left:220px;top:437px;width:86px;height:40px;text-align:center;line-height:40px;white-space:nowrap;">比分<span class="n">(</span>半场<span class="n">)</span></div>
<div style="left:307px;top:437px;width:39px;height:40px;text-align:center;line-height:40px;white-space:nowrap;">角球</div>
<div style="left:347px;top:437px;width:84px;height:40px;text-align:center;line-height:40px;white-space:nowrap;">客场</div>
<div style="left:432px;top:459px;width:41px;height:17px;text-align:center;line-height:17px;white-space:nowrap;">主</div>
<div style="left:474px;top:459px;width:70px;height:17px;text-align:center;line-height:17px;white-space:nowrap;">盘口</div>
<div style="left:545px;top:459px;width:41px;height:17px;text-align:center;line-height:17px;white-space:nowrap;">客</div>
<div style="left:587px;top:459px;width:63px;height:17px;text-align:center;line-height:17px;white-space:nowrap;">主</div>
<div style="left:651px;top:459px;width:61px;height:17px;text-align:center;line-height:17px;white-space:nowrap;">和</div>
<div style="left:713px;top:459px;width:63px;height:17px;text-align:center;line-height:17px;white-space:nowrap;">客</div>
<div style="left:777px;top:459px;width:38px;height:17px;text-align:center;line-height:17px;white-space:nowrap;">胜负</div>
<div style="left:816px;top:459px;width:38px;height:17px;text-align:center;line-height:17px;white-space:nowrap;">让球</div>
<div style="left:855px;top:459px;width:56px;height:17px;text-align:center;line-height:17px;white-space:nowrap;">进球数</div>
<div class="sel" style="left:457px;top:435px;width:58px;height:18px;"><span class="st" style="line-height:18px;">Crow*</span><svg class="chev" style="top:6px" width="10" height="8" viewBox="0 0 10 8"><path d="M0.9 1.6 L5 5.6 L9.1 1.6" fill="none" stroke="#111" stroke-width="2.2"/></svg></div>
<div class="sel" style="left:525px;top:435px;width:34px;height:18px;"><span class="st" style="line-height:18px;font-size:12px">终</span><svg class="chev" style="top:6px" width="10" height="8" viewBox="0 0 10 8"><path d="M0.9 1.6 L5 5.6 L9.1 1.6" fill="none" stroke="#111" stroke-width="2.2"/></svg></div>
<div class="sel" style="left:618px;top:435px;width:82px;height:18px;"><span class="st" style="line-height:18px;font-size:12px">胜平负均值</span><svg class="chev" style="top:6px" width="10" height="8" viewBox="0 0 10 8"><path d="M0.9 1.6 L5 5.6 L9.1 1.6" fill="none" stroke="#111" stroke-width="2.2"/></svg></div>
<div class="sel" style="left:709px;top:435px;width:34px;height:18px;"><span class="st" style="line-height:18px;font-size:12px">终</span><svg class="chev" style="top:6px" width="10" height="8" viewBox="0 0 10 8"><path d="M0.9 1.6 L5 5.6 L9.1 1.6" fill="none" stroke="#111" stroke-width="2.2"/></svg></div>
<div class="sel" style="left:820px;top:435px;width:46px;height:18px;"><span class="st" style="line-height:18px;font-size:12px">全场</span><svg class="chev" style="top:6px" width="10" height="8" viewBox="0 0 10 8"><path d="M0.9 1.6 L5 5.6 L9.1 1.6" fill="none" stroke="#111" stroke-width="2.2"/></svg></div>
<div style="left:3px;top:477px;width:56px;height:27px;text-align:center;line-height:27px;white-space:nowrap;color:#fff">中超</div>
<div style="left:60px;top:477px;width:73px;height:27px;text-align:center;line-height:27px;white-space:nowrap;"><span class="n">24-07-27</span></div>
<div style="left:134px;top:477px;width:85px;height:27px;text-align:center;line-height:27px;white-space:nowrap;color:#222">长春亚泰</div>
<div style="left:347px;top:477px;width:84px;height:27px;text-align:center;line-height:27px;white-space:nowrap;color:#008000">沧州雄狮</div>
<div style="left:220px;top:477px;width:86px;height:27px;text-align:center;line-height:27px;white-space:nowrap;"><span style="color:#ff0000"><span class="n">1-0</span></span><span class="n">(0-0)</span></div>
<div style="left:307px;top:477px;width:39px;height:27px;text-align:center;line-height:27px;white-space:nowrap;"><span class="n">5-3</span></div>
<div style="left:432px;top:477px;width:41px;height:27px;text-align:center;line-height:27px;white-space:nowrap;"><span class="n">0.96</span></div>
<div style="left:474px;top:477px;width:70px;height:27px;text-align:center;line-height:27px;white-space:nowrap;color:#2454a4">球半</div>
<div style="left:545px;top:477px;width:41px;height:27px;text-align:center;line-height:27px;white-space:nowrap;"><span class="n">0.90</span></div>
<div style="left:587px;top:477px;width:63px;height:27px;text-align:center;line-height:27px;white-space:nowrap;"><span class="n">1.36</span></div>
<div style="left:651px;top:477px;width:61px;height:27px;text-align:center;line-height:27px;white-space:nowrap;color:#36619f"><span class="n">4.81</span></div>
<div style="left:713px;top:477px;width:63px;height:27px;text-align:center;line-height:27px;white-space:nowrap;"><span class="n">7.39</span></div>
<div style="left:777px;top:477px;width:38px;height:27px;text-align:center;line-height:27px;white-space:nowrap;color:#008000">负</div>
<div style="left:816px;top:477px;width:38px;height:27px;text-align:center;line-height:27px;white-space:nowrap;color:#ff0000">赢</div>
<div style="left:855px;top:477px;width:56px;height:27px;text-align:center;line-height:27px;white-space:nowrap;color:#008000">小</div>
<div style="left:3px;top:505px;width:56px;height:27px;text-align:center;line-height:27px;white-space:nowrap;color:#fff">中超</div>
<div style="left:60px;top:505px;width:73px;height:27px;text-align:center;line-height:27px;white-space:nowrap;"><span class="n">24-07-22</span></div>
<div style="left:134px;top:505px;width:85px;height:27px;text-align:center;line-height:27px;white-space:nowrap;color:#008000">沧州雄狮</div>
<div style="left:347px;top:505px;width:84px;height:27px;text-align:center;line-height:27px;white-space:nowrap;color:#222">上海申花</div>
<div style="left:220px;top:505px;width:86px;height:27px;text-align:center;line-height:27px;white-space:nowrap;"><span style="color:#ff0000"><span class="n">0-5</span></span><span class="n">(0-2)</span></div>
<div style="left:307px;top:505px;width:39px;height:27px;text-align:center;line-height:27px;white-space:nowrap;"><span class="n">2-8</span></div>
<div style="left:432px;top:505px;width:41px;height:27px;text-align:center;line-height:27px;white-space:nowrap;"><span class="n">1.06</span></div>
<div style="left:474px;top:505px;width:70px;height:27px;text-align:center;line-height:27px;white-space:nowrap;color:#2454a4"><span class="ast">*</span>球半</div>
<div style="left:545px;top:505px;width:41px;height:27px;text-align:center;line-height:27px;white-space:nowrap;"><span class="n">0.80</span></div>
<div style="left:587px;top:505px;width:63px;height:27px;text-align:center;line-height:27px;white-space:nowrap;"><span class="n">10.82</span></div>
<div style="left:651px;top:505px;width:61px;height:27px;text-align:center;line-height:27px;white-space:nowrap;color:#36619f"><span class="n">5.68</span></div>
<div style="left:713px;top:505px;width:63px;height:27px;text-align:center;line-height:27px;white-space:nowrap;"><span class="n">1.23</span></div>
<div style="left:777px;top:505px;width:38px;height:27px;text-align:center;line-height:27px;white-space:nowrap;color:#008000">负</div>
<div style="left:816px;top:505px;width:38px;height:27px;text-align:center;line-height:27px;white-space:nowrap;color:#008000">输</div>
<div style="left:855px;top:505px;width:56px;height:27px;text-align:center;line-height:27px;white-space:nowrap;color:#ff0000">大</div>
<div style="left:3px;top:533px;width:56px;height:27px;text-align:center;line-height:27px;white-space:nowrap;color:#fff">中超</div>
<div style="left:60px;top:533px;width:73px;height:27px;text-align:center;line-height:27px;white-space:nowrap;"><span class="n">24-07-12</span></div>
<div style="left:134px;top:533px;width:85px;height:27px;text-align:center;line-height:27px;white-space:nowrap;color:#008000"><span class="rc"><span class="n">1</span></span>沧州雄狮</div>
<div style="left:347px;top:533px;width:84px;height:27px;text-align:center;line-height:27px;white-space:nowrap;color:#222">武汉三镇</div>
<div style="left:220px;top:533px;width:86px;height:27px;text-align:center;line-height:27px;white-space:nowrap;"><span style="color:#ff0000"><span class="n">1-1</span></span><span class="n">(1-1)</span></div>
<div style="left:307px;top:533px;width:39px;height:27px;text-align:center;line-height:27px;white-space:nowrap;"><span class="n">5-5</span></div>
<div style="left:432px;top:533px;width:41px;height:27px;text-align:center;line-height:27px;white-space:nowrap;"><span class="n">0.96</span></div>
<div style="left:474px;top:533px;width:70px;height:27px;text-align:center;line-height:27px;white-space:nowrap;color:#2454a4"><span class="ast">*</span>平<span class="n">/</span>半</div>
<div style="left:545px;top:533px;width:41px;height:27px;text-align:center;line-height:27px;white-space:nowrap;"><span class="n">0.90</span></div>
<div style="left:587px;top:533px;width:63px;height:27px;text-align:center;line-height:27px;white-space:nowrap;"><span class="n">2.86</span></div>
<div style="left:651px;top:533px;width:61px;height:27px;text-align:center;line-height:27px;white-space:nowrap;color:#36619f"><span class="n">3.47</span></div>
<div style="left:713px;top:533px;width:63px;height:27px;text-align:center;line-height:27px;white-space:nowrap;"><span class="n">2.25</span></div>
<div style="left:777px;top:533px;width:38px;height:27px;text-align:center;line-height:27px;white-space:nowrap;color:#0000ff">平</div>
<div style="left:816px;top:533px;width:38px;height:27px;text-align:center;line-height:27px;white-space:nowrap;color:#ff0000">赢</div>
<div style="left:855px;top:533px;width:56px;height:27px;text-align:center;line-height:27px;white-space:nowrap;color:#008000">小</div>
<div style="left:3px;top:561px;width:56px;height:27px;text-align:center;line-height:27px;white-space:nowrap;color:#fff">中超</div>
<div style="left:60px;top:561px;width:73px;height:27px;text-align:center;line-height:27px;white-space:nowrap;"><span class="n">24-07-06</span></div>
<div style="left:134px;top:561px;width:85px;height:27px;text-align:center;line-height:27px;white-space:nowrap;color:#008000">沧州雄狮</div>
<div style="left:347px;top:561px;width:84px;height:27px;text-align:center;line-height:27px;white-space:nowrap;color:#222">深圳新鹏</div>
<div style="left:220px;top:561px;width:86px;height:27px;text-align:center;line-height:27px;white-space:nowrap;"><span style="color:#ff0000"><span class="n">1-1</span></span><span class="n">(1-1)</span></div>
<div style="left:307px;top:561px;width:39px;height:27px;text-align:center;line-height:27px;white-space:nowrap;"><span class="n">3-7</span></div>
<div style="left:432px;top:561px;width:41px;height:27px;text-align:center;line-height:27px;white-space:nowrap;"><span class="n">1.06</span></div>
<div style="left:474px;top:561px;width:70px;height:27px;text-align:center;line-height:27px;white-space:nowrap;color:#2454a4">平手</div>
<div style="left:545px;top:561px;width:41px;height:27px;text-align:center;line-height:27px;white-space:nowrap;"><span class="n">0.80</span></div>
<div style="left:587px;top:561px;width:63px;height:27px;text-align:center;line-height:27px;white-space:nowrap;"><span class="n">3.03</span></div>
<div style="left:651px;top:561px;width:61px;height:27px;text-align:center;line-height:27px;white-space:nowrap;color:#36619f"><span class="n">3.40</span></div>
<div style="left:713px;top:561px;width:63px;height:27px;text-align:center;line-height:27px;white-space:nowrap;"><span class="n">2.22</span></div>
<div style="left:777px;top:561px;width:38px;height:27px;text-align:center;line-height:27px;white-space:nowrap;color:#0000ff">平</div>
<div style="left:816px;top:561px;width:38px;height:27px;text-align:center;line-height:27px;white-space:nowrap;color:#0000ff">走</div>
<div style="left:855px;top:561px;width:56px;height:27px;text-align:center;line-height:27px;white-space:nowrap;color:#008000">小</div>
<div style="left:3px;top:589px;width:56px;height:27px;text-align:center;line-height:27px;white-space:nowrap;color:#fff">中超</div>
<div style="left:60px;top:589px;width:73px;height:27px;text-align:center;line-height:27px;white-space:nowrap;"><span class="n">24-06-30</span></div>
<div style="left:134px;top:589px;width:85px;height:27px;text-align:center;line-height:27px;white-space:nowrap;color:#222">成都蓉城</div>
<div style="left:347px;top:589px;width:84px;height:27px;text-align:center;line-height:27px;white-space:nowrap;color:#008000">沧州雄狮</div>
<div style="left:220px;top:589px;width:86px;height:27px;text-align:center;line-height:27px;white-space:nowrap;"><span style="color:#ff0000"><span class="n">4-0</span></span><span class="n">(2-0)</span></div>
<div style="left:307px;top:589px;width:39px;height:27px;text-align:center;line-height:27px;white-space:nowrap;"><span class="n">3-3</span></div>
<div style="left:432px;top:589px;width:41px;height:27px;text-align:center;line-height:27px;white-space:nowrap;"><span class="n">0.88</span></div>
<div style="left:474px;top:589px;width:70px;height:27px;text-align:center;line-height:27px;white-space:nowrap;color:#2454a4">两球半</div>
<div style="left:545px;top:589px;width:41px;height:27px;text-align:center;line-height:27px;white-space:nowrap;"><span class="n">0.98</span></div>
<div style="left:587px;top:589px;width:63px;height:27px;text-align:center;line-height:27px;white-space:nowrap;"><span class="n">1.11</span></div>
<div style="left:651px;top:589px;width:61px;height:27px;text-align:center;line-height:27px;white-space:nowrap;color:#36619f"><span class="n">8.56</span></div>
<div style="left:713px;top:589px;width:63px;height:27px;text-align:center;line-height:27px;white-space:nowrap;"><span class="n">15.67</span></div>
<div style="left:777px;top:589px;width:38px;height:27px;text-align:center;line-height:27px;white-space:nowrap;color:#008000">负</div>
<div style="left:816px;top:589px;width:38px;height:27px;text-align:center;line-height:27px;white-space:nowrap;color:#008000">输</div>
<div style="left:855px;top:589px;width:56px;height:27px;text-align:center;line-height:27px;white-space:nowrap;color:#ff0000">大</div>
<div style="left:3px;top:617px;width:56px;height:27px;text-align:center;line-height:27px;white-space:nowrap;color:#fff">中超</div>
<div style="left:60px;top:617px;width:73px;height:27px;text-align:center;line-height:27px;white-space:nowrap;"><span class="n">24-06-26</span></div>
<div style="left:134px;top:617px;width:85px;height:27px;text-align:center;line-height:27px;white-space:nowrap;color:#222">北京国安</div>
<div style="left:347px;top:617px;width:84px;height:27px;text-align:center;line-height:27px;white-space:nowrap;color:#008000">沧州雄狮</div>
<div style="left:220px;top:617px;width:86px;height:27px;text-align:center;line-height:27px;white-space:nowrap;"><span style="color:#ff0000"><span class="n">4-0</span></span><span class="n">(2-0)</span></div>
<div style="left:307px;top:617px;width:39px;height:27px;text-align:center;line-height:27px;white-space:nowrap;"><span class="n">3-3</span></div>
<div style="left:432px;top:617px;width:41px;height:27px;text-align:center;line-height:27px;white-space:nowrap;"><span class="n">1.01</span></div>
<div style="left:474px;top:617px;width:70px;height:27px;text-align:center;line-height:27px;white-space:nowrap;color:#2454a4">球半<span class="n">/</span>两</div>
<div style="left:545px;top:617px;width:41px;height:27px;text-align:center;line-height:27px;white-space:nowrap;"><span class="n">0.85</span></div>
<div style="left:587px;top:617px;width:63px;height:27px;text-align:center;line-height:27px;white-space:nowrap;"><span class="n">1.26</span></div>
<div style="left:651px;top:617px;width:61px;height:27px;text-align:center;line-height:27px;white-space:nowrap;color:#36619f"><span class="n">5.71</span></div>
<div style="left:713px;top:617px;width:63px;height:27px;text-align:center;line-height:27px;white-space:nowrap;"><span class="n">8.64</span></div>
<div style="left:777px;top:617px;width:38px;height:27px;text-align:center;line-height:27px;white-space:nowrap;color:#008000">负</div>
<div style="left:816px;top:617px;width:38px;height:27px;text-align:center;line-height:27px;white-space:nowrap;color:#008000">输</div>
<div style="left:855px;top:617px;width:56px;height:27px;text-align:center;line-height:27px;white-space:nowrap;color:#ff0000">大</div>
<div style="left:3px;top:645px;width:56px;height:27px;text-align:center;line-height:27px;white-space:nowrap;color:#fff">中协杯</div>
<div style="left:60px;top:645px;width:73px;height:27px;text-align:center;line-height:27px;white-space:nowrap;"><span class="n">24-06-23</span></div>
<div style="left:134px;top:645px;width:85px;height:27px;text-align:center;line-height:27px;white-space:nowrap;color:#222">南京城市</div>
<div style="left:347px;top:645px;width:84px;height:27px;text-align:center;line-height:27px;white-space:nowrap;color:#008000">沧州雄狮</div>
<div style="left:220px;top:645px;width:86px;height:27px;text-align:center;line-height:27px;white-space:nowrap;"><span style="color:#ff0000"><span class="n">1-0</span></span><span class="n">(0-0)</span></div>
<div style="left:307px;top:645px;width:39px;height:27px;text-align:center;line-height:27px;white-space:nowrap;"><span class="n">10-4</span></div>
<div style="left:432px;top:645px;width:41px;height:27px;text-align:center;line-height:27px;white-space:nowrap;"><span class="n">0.65</span></div>
<div style="left:474px;top:645px;width:70px;height:27px;text-align:center;line-height:27px;white-space:nowrap;color:#2454a4">半<span class="n">/</span>一</div>
<div style="left:545px;top:645px;width:41px;height:27px;text-align:center;line-height:27px;white-space:nowrap;"><span class="n">1.12</span></div>
<div style="left:587px;top:645px;width:63px;height:27px;text-align:center;line-height:27px;white-space:nowrap;"><span class="n">1.57</span></div>
<div style="left:651px;top:645px;width:61px;height:27px;text-align:center;line-height:27px;white-space:nowrap;color:#36619f"><span class="n">3.97</span></div>
<div style="left:713px;top:645px;width:63px;height:27px;text-align:center;line-height:27px;white-space:nowrap;"><span class="n">4.92</span></div>
<div style="left:777px;top:645px;width:38px;height:27px;text-align:center;line-height:27px;white-space:nowrap;color:#008000">负</div>
<div style="left:816px;top:645px;width:38px;height:27px;text-align:center;line-height:27px;white-space:nowrap;color:#008000">输</div>
<div style="left:855px;top:645px;width:56px;height:27px;text-align:center;line-height:27px;white-space:nowrap;color:#008000">小</div>
<div style="left:3px;top:673px;width:56px;height:27px;text-align:center;line-height:27px;white-space:nowrap;color:#fff">中超</div>
<div style="left:60px;top:673px;width:73px;height:27px;text-align:center;line-height:27px;white-space:nowrap;"><span class="n">24-06-16</span></div>
<div style="left:134px;top:673px;width:85px;height:27px;text-align:center;line-height:27px;white-space:nowrap;color:#008000">沧州雄狮</div>
<div style="left:347px;top:673px;width:84px;height:27px;text-align:center;line-height:27px;white-space:nowrap;color:#222">青岛海牛<span class="rc"><span class="n">1</span></span></div>
<div style="left:220px;top:673px;width:86px;height:27px;text-align:center;line-height:27px;white-space:nowrap;"><span style="color:#ff0000"><span class="n">0-1</span></span><span class="n">(0-1)</span></div>
<div style="left:307px;top:673px;width:39px;height:27px;text-align:center;line-height:27px;white-space:nowrap;"><span class="n">3-7</span></div>
<div style="left:432px;top:673px;width:41px;height:27px;text-align:center;line-height:27px;white-space:nowrap;"><span class="n">0.88</span></div>
<div style="left:474px;top:673px;width:70px;height:27px;text-align:center;line-height:27px;white-space:nowrap;color:#2454a4"><span class="ast">*</span>平<span class="n">/</span>半</div>
<div style="left:545px;top:673px;width:41px;height:27px;text-align:center;line-height:27px;white-space:nowrap;"><span class="n">0.98</span></div>
<div style="left:587px;top:673px;width:63px;height:27px;text-align:center;line-height:27px;white-space:nowrap;"><span class="n">2.89</span></div>
<div style="left:651px;top:673px;width:61px;height:27px;text-align:center;line-height:27px;white-space:nowrap;color:#36619f"><span class="n">3.50</span></div>
<div style="left:713px;top:673px;width:63px;height:27px;text-align:center;line-height:27px;white-space:nowrap;"><span class="n">2.20</span></div>
<div style="left:777px;top:673px;width:38px;height:27px;text-align:center;line-height:27px;white-space:nowrap;color:#008000">负</div>
<div style="left:816px;top:673px;width:38px;height:27px;text-align:center;line-height:27px;white-space:nowrap;color:#008000">输</div>
<div style="left:855px;top:673px;width:56px;height:27px;text-align:center;line-height:27px;white-space:nowrap;color:#008000">小</div>
<div style="left:3px;top:701px;width:56px;height:27px;text-align:center;line-height:27px;white-space:nowrap;color:#fff">中超</div>
<div style="left:60px;top:701px;width:73px;height:27px;text-align:center;line-height:27px;white-space:nowrap;"><span class="n">24-05-26</span></div>
<div style="left:134px;top:701px;width:85px;height:27px;text-align:center;line-height:27px;white-space:nowrap;color:#222">上海海港</div>
<div style="left:347px;top:701px;width:84px;height:27px;text-align:center;line-height:27px;white-space:nowrap;color:#008000">沧州雄狮</div>
<div style="left:220px;top:701px;width:86px;height:27px;text-align:center;line-height:27px;white-space:nowrap;"><span style="color:#ff0000"><span class="n">4-1</span></span><span class="n">(1-1)</span></div>
<div style="left:307px;top:701px;width:39px;height:27px;text-align:center;line-height:27px;white-space:nowrap;"><span class="n">13-2</span></div>
<div style="left:432px;top:701px;width:41px;height:27px;text-align:center;line-height:27px;white-space:nowrap;"><span class="n">0.94</span></div>
<div style="left:474px;top:701px;width:70px;height:27px;text-align:center;line-height:27px;white-space:nowrap;color:#2454a4">四球</div>
<div style="left:545px;top:701px;width:41px;height:27px;text-align:center;line-height:27px;white-space:nowrap;"><span class="n">0.82</span></div>
<div style="left:587px;top:701px;width:63px;height:27px;text-align:center;line-height:27px;white-space:nowrap;"><span class="n">1.02</span></div>
<div style="left:651px;top:701px;width:61px;height:27px;text-align:center;line-height:27px;white-space:nowrap;color:#36619f"><span class="n">17.06</span></div>
<div style="left:713px;top:701px;width:63px;height:27px;text-align:center;line-height:27px;white-space:nowrap;"><span class="n">35.43</span></div>
<div style="left:777px;top:701px;width:38px;height:27px;text-align:center;line-height:27px;white-space:nowrap;color:#008000">负</div>
<div style="left:816px;top:701px;width:38px;height:27px;text-align:center;line-height:27px;white-space:nowrap;color:#ff0000">赢</div>
<div style="left:855px;top:701px;width:56px;height:27px;text-align:center;line-height:27px;white-space:nowrap;color:#ff0000">大</div>
<div style="left:3px;top:729px;width:56px;height:27px;text-align:center;line-height:27px;white-space:nowrap;color:#fff">中超</div>
<div style="left:60px;top:729px;width:73px;height:27px;text-align:center;line-height:27px;white-space:nowrap;"><span class="n">24-05-21</span></div>
<div style="left:134px;top:729px;width:85px;height:27px;text-align:center;line-height:27px;white-space:nowrap;color:#222">南通支云</div>
<div style="left:347px;top:729px;width:84px;height:27px;text-align:center;line-height:27px;white-space:nowrap;color:#008000">沧州雄狮<span class="rc"><span class="n">1</span></span></div>
<div style="left:220px;top:729px;width:86px;height:27px;text-align:center;line-height:27px;white-space:nowrap;"><span style="color:#ff0000"><span class="n">1-1</span></span><span class="n">(0-0)</span></div>
<div style="left:307px;top:729px;width:39px;height:27px;text-align:center;line-height:27px;white-space:nowrap;"><span class="n">9-0</span></div>
<div style="left:432px;top:729px;width:41px;height:27px;text-align:center;line-height:27px;white-space:nowrap;"><span class="n">0.85</span></div>
<div style="left:474px;top:729px;width:70px;height:27px;text-align:center;line-height:27px;white-space:nowrap;color:#2454a4">半球</div>
<div style="left:545px;top:729px;width:41px;height:27px;text-align:center;line-height:27px;white-space:nowrap;"><span class="n">0.97</span></div>
<div style="left:587px;top:729px;width:63px;height:27px;text-align:center;line-height:27px;white-space:nowrap;"><span class="n">1.73</span></div>
<div style="left:651px;top:729px;width:61px;height:27px;text-align:center;line-height:27px;white-space:nowrap;color:#36619f"><span class="n">3.72</span></div>
<div style="left:713px;top:729px;width:63px;height:27px;text-align:center;line-height:27px;white-space:nowrap;"><span class="n">4.24</span></div>
<div style="left:777px;top:729px;width:38px;height:27px;text-align:center;line-height:27px;white-space:nowrap;color:#0000ff">平</div>
<div style="left:816px;top:729px;width:38px;height:27px;text-align:center;line-height:27px;white-space:nowrap;color:#ff0000">赢</div>
<div style="left:855px;top:729px;width:56px;height:27px;text-align:center;line-height:27px;white-space:nowrap;color:#008000">小</div>
<div style="left:3px;top:756px;width:908px;height:27px;text-align:center;line-height:27px;white-space:nowrap;">近<span style="color:#f00">10</span>场,胜0平3负7, 胜率:<span class="pct">0%</span> 赢率:<span class="bl">40%</span> 大:<span class="bl">40%</span> 单率:<span class="bl">50%</span></div>
<div style="left:919px;top:174px;width:8px;height:32px;background:#1a94d6;border-radius:3px"></div>
</div></body></html>
